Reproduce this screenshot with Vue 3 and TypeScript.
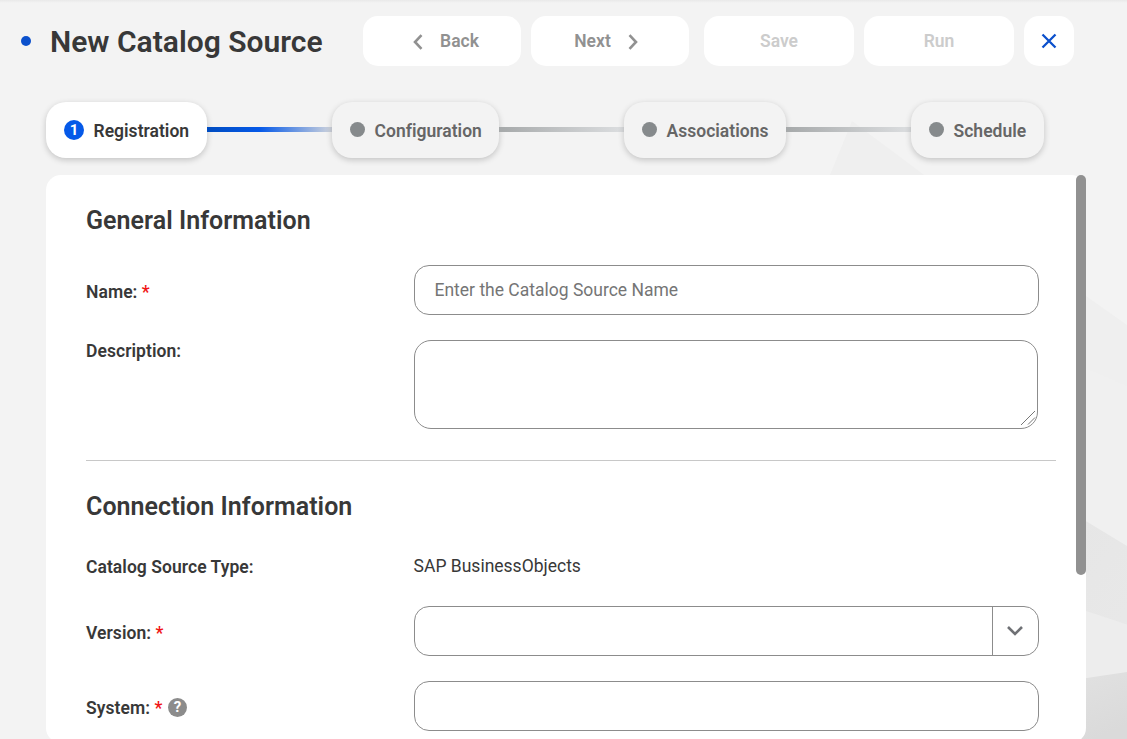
<script setup lang="ts">
import { ref } from 'vue'

interface Step {
  label: string
  width: number
}

const steps: Step[] = [
  { label: 'Registration', width: 161 },
  { label: 'Configuration', width: 167 },
  { label: 'Associations', width: 162 },
  { label: 'Schedule', width: 133 },
]
const active = ref(0)
const name = ref('')
const description = ref('')
const system = ref('')
</script>

<template>
  <div class="page">
    <svg class="backdrop" width="1127" height="739" viewBox="0 0 1127 739" aria-hidden="true">
      <defs>
        <linearGradient id="low" x1="0" y1="0" x2="0.3" y2="1">
          <stop offset="0" stop-color="#e1e1e1" />
          <stop offset="1" stop-color="#dadada" />
        </linearGradient>
        <linearGradient id="mid" x1="0" y1="0" x2="0.3" y2="1">
          <stop offset="0" stop-color="#e6e6e6" />
          <stop offset="1" stop-color="#e9e9e9" />
        </linearGradient>
      </defs>
      <path d="M852 121L1086 296L1127 325V739H600Z" fill="#efefef" />
      <path d="M1080 366L1127 386V546H1080Z" fill="#f0f0f0" />
      <path d="M1080 517.500L1127 546V739H1080Z" fill="url(#mid)" />
      <path d="M1080 609L1127 624.500V739H1080Z" fill="#ededed" />
      <path d="M1080 679L1127 672V739H1080Z" fill="url(#low)" />
    </svg>

    <header class="header">
      <span class="dot"></span>
      <h1>New Catalog Source</h1>
      <div class="actions">
        <button class="btn wide">
          <svg class="chev" width="10" height="16" viewBox="0 0 10 16"><path d="M8.500 1.200L2 8L8.500 14.800" /></svg>
          <span class="back">Back</span>
        </button>
        <button class="btn wide">
          <span class="next">Next</span>
          <svg class="chev" width="10" height="16" viewBox="0 0 10 16"><path d="M1.500 1.200L8 8L1.500 14.800" /></svg>
        </button>
        <button class="btn mid first" disabled>Save</button>
        <button class="btn mid" disabled>Run</button>
        <button class="btn close" aria-label="Close">
          <svg width="16" height="16" viewBox="0 0 16 16"><path d="M1.500 1.500L14.500 14.500M14.500 1.500L1.500 14.500" /></svg>
        </button>
      </div>
    </header>

    <nav class="steps">
      <template v-for="(s, i) in steps" :key="s.label">
        <span v-if="i > 0" class="link" :class="{ on: i - 1 === active }"></span>
        <button class="step" :class="{ on: i === active }" :style="{ width: s.width + 'px' }">
          <span class="mark"><template v-if="i === active">{{ i + 1 }}</template></span>
          <span class="label">{{ s.label }}</span>
        </button>
      </template>
    </nav>

    <main class="card">
      <div class="form">
        <h2>General Information</h2>
        <div class="row name">
          <label>Name: <i>*</i></label>
          <input v-model="name" class="field" placeholder="Enter the Catalog Source Name" />
        </div>
        <div class="row desc">
          <label>Description:</label>
          <div class="area">
            <textarea v-model="description"></textarea>
            <svg class="grip" width="16" height="16" viewBox="0 0 16 16"><path d="M1 15L15 1M8 14.500L15 7.500" /></svg>
          </div>
        </div>
        <hr />
        <h2>Connection Information</h2>
        <div class="row type">
          <label>Catalog Source Type:</label>
          <span class="value">SAP BusinessObjects</span>
        </div>
        <div class="row version">
          <label>Version: <i>*</i></label>
          <div class="field select">
            <span class="arrow">
              <svg width="16" height="10" viewBox="0 0 16 10"><path d="M1 1L8 8L15 1" /></svg>
            </span>
          </div>
        </div>
        <div class="row system">
          <label>System: <i>*</i></label>
          <span class="help">?</span>
          <input v-model="system" class="field" />
        </div>
      </div>
      <span class="thumb"></span>
    </main>
  </div>
</template>

<style>
body {
  margin: 0;
  overflow: hidden;
}
</style>

<style scoped>
* {
  box-sizing: border-box;
}
.page {
  position: relative;
  width: 1127px;
  height: 739px;
  overflow: hidden;
  background: linear-gradient(#e9e9e9, #f3f3f3 3px);
  font-family: Roboto, 'Liberation Sans', sans-serif;
  font-size: 17.5px;
  color: #383838;
}
.backdrop {
  position: absolute;
  inset: 0;
}
button {
  border: 0;
  padding: 0;
  font: inherit;
}
.header {
  position: relative;
  display: flex;
  height: 102px;
  padding: 16px 0 0 21px;
}
.dot {
  width: 10px;
  height: 10px;
  margin: 20px 19px 0 0;
  border-radius: 50%;
  background: #0b50cc;
}
h1 {
  width: 313px;
  margin: 0;
  font-size: 30px;
  font-weight: 600;
  line-height: 52px;
  white-space: nowrap;
}
.actions {
  display: flex;
  gap: 10px;
}
.btn {
  display: flex;
  align-items: center;
  justify-content: center;
  height: 50px;
  border-radius: 15px;
  background: #fff;
  color: #919191;
  font-weight: 600;
}
.btn:disabled {
  color: #ccc;
}
.wide {
  width: 158px;
}
.wide:first-child {
  padding-left: 8px;
}
.wide:nth-child(2) {
  padding-right: 8px;
}
.mid {
  width: 150px;
}
.first {
  margin-left: 5px;
}
.close {
  width: 50px;
}
.close svg {
  margin-top: -1px;
  fill: none;
  stroke: #0b50cc;
  stroke-width: 2.3;
}
.chev {
  margin-top: 1px;
  fill: none;
  stroke: #919191;
  stroke-width: 2.6;
}
.back {
  margin-left: 17px;
}
.next {
  margin-right: 17px;
}
.steps {
  position: relative;
  display: flex;
  height: 73px;
  padding-left: 46px;
}
.step {
  display: flex;
  flex: none;
  align-items: center;
  height: 56px;
  padding-left: 17.5px;
  border-radius: 20px;
  background: #f3f3f3;
  box-shadow: 0 2px 6px rgba(0, 0, 0, 0.2);
  color: #666;
  font-weight: 600;
  letter-spacing: 0.02px;
}
.step.on {
  padding-left: 18px;
  background: #fff;
  color: #383838;
}
.mark {
  width: 15px;
  height: 15px;
  margin: 0 10px 1px 0;
  border-radius: 50%;
  background: #868a8c;
}
.on .mark {
  width: 20px;
  height: 20px;
  margin: 0 9.5px 0 0;
  background: #0559e8;
  color: #fff;
  font-size: 15px;
  font-weight: 700;
  line-height: 20px;
  text-align: center;
}
.label {
  padding-top: 2px;
}
.link {
  width: 125px;
  height: 5px;
  margin-top: 25px;
  background: linear-gradient(90deg, #a6a9aa, #dcdee0);
}
.link.on {
  background: linear-gradient(90deg, #004cc0, #0559e8 42%, #d0d4dc);
}
.card {
  position: relative;
  width: 1040px;
  height: 568px;
  margin-left: 46px;
  border-radius: 15px;
  background: #fff;
}
.form {
  padding: 28px 30px 0 40px;
}
h2 {
  margin: 0;
  font-size: 25px;
  font-weight: 600;
  letter-spacing: 0.04px;
  line-height: 36px;
}
.row {
  display: flex;
  position: relative;
}
.row > label {
  width: 328px;
  font-weight: 600;
  letter-spacing: 0.05px;
  line-height: 24px;
}
label i {
  color: #f01414;
  font-style: normal;
}
.field {
  width: 625px;
  height: 50px;
  padding: 0 19.5px;
  border: 1px solid #8c8c8c;
  border-radius: 15px;
  outline: 0;
  background: #fff;
  font: inherit;
}
.field::placeholder {
  color: #757575;
  opacity: 1;
}
.name {
  height: 75px;
  margin-top: 26px;
}
.name label,
.version label,
.system label {
  padding-top: 15px;
}
.desc {
  height: 90px;
}
.desc label {
  margin-top: -1px;
}
.area {
  position: relative;
  width: 624px;
  height: 89px;
}
textarea {
  display: block;
  width: 624px;
  height: 89px;
  padding: 10px 20px;
  border: 1.25px solid #8c8c8c;
  border-radius: 17px;
  outline: 0;
  resize: none;
  font: inherit;
}
.grip {
  position: absolute;
  right: 2px;
  bottom: 3px;
  fill: none;
  stroke: #777;
}
hr {
  height: 1px;
  margin: 30px 0 28px;
  border: 0;
  background: #c8c8c8;
}
.type {
  height: 51px;
  margin-top: 30px;
}
.value {
  margin-left: -0.4px;
  line-height: 22px;
}
.version {
  height: 75px;
}
.select {
  display: flex;
  justify-content: flex-end;
  padding: 0;
}
.arrow {
  display: flex;
  width: 46px;
  padding-right: 1px;
  align-items: center;
  justify-content: center;
  border-left: 1px solid #8c8c8c;
}
.arrow svg {
  fill: none;
  stroke: #6f7175;
  stroke-width: 2.6;
}
.row.system label {
  width: 77px;
}
.help {
  width: 19px;
  height: 19px;
  margin: 17px 227px 0 5px;
  border-radius: 50%;
  background: #8c8c8c;
  color: #fff;
  font-size: 15px;
  font-weight: 700;
  line-height: 19px;
  text-align: center;
}
.thumb {
  position: absolute;
  top: 0;
  right: 0;
  width: 10px;
  height: 400px;
  border-radius: 5px;
  background: #919191;
}
</style>
